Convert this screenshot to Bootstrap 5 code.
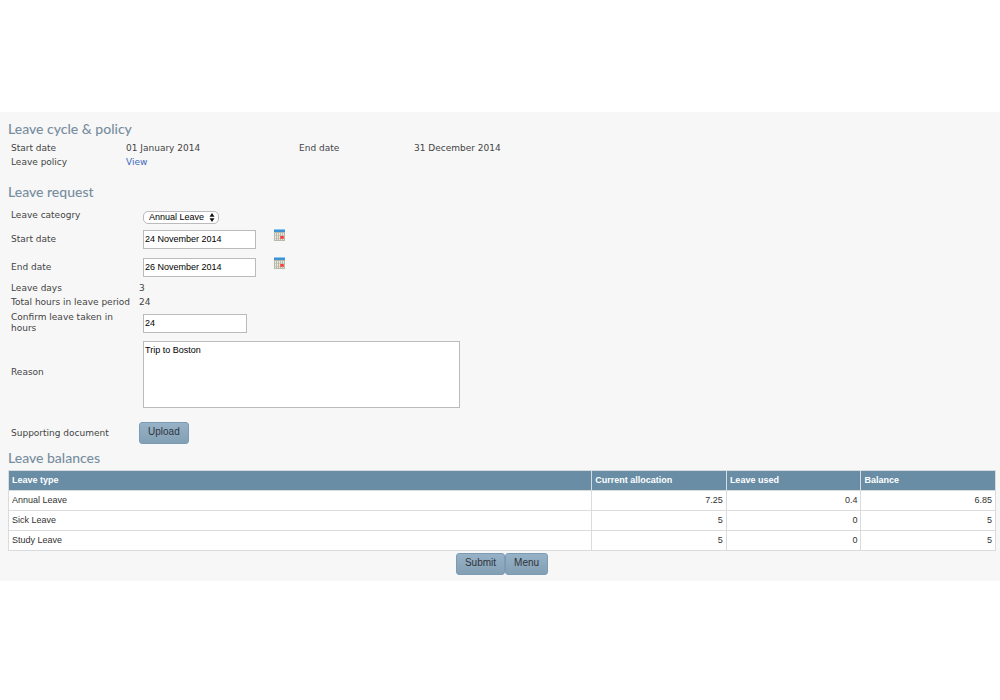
<!DOCTYPE html>
<html lang="en">
<head>
<meta charset="utf-8">
<meta name="viewport" content="width=device-width, initial-scale=1">
<title>Leave request</title>
<link href="https://cdn.jsdelivr.net/npm/bootstrap@5.3.0/dist/css/bootstrap.min.css" rel="stylesheet">
<style>
  body { background: #fff; padding-top: 112px; color: #444; font: 9px/14px "DejaVu Sans", Verdana, sans-serif; }
  .leave-page { background: #f7f7f7; padding: 7px 4px 6px 8px; }
  h2 { font: 500 14px/20px Lato, "Noto Sans", sans-serif; color: #778e9f; margin: 0; }
  a { color: #4168b8; text-decoration: none; }
  .cycle { margin: 2px 0 13px; padding-left: 3px; display: grid; grid-template-columns: 115px 173px 115px auto; justify-content: start; }
  .line { display: grid; grid-template-columns: 128px 1fr; align-items: center; padding-left: 3px; min-height: 14px; }
  .line-field { min-height: 28px; }
  .line-category { padding-top: 5px; padding-bottom: 1px; }
  .line-upload { padding-top: 10px; padding-bottom: 4px; }
  .line label { line-height: 11px; padding-right: 8px; }
  .field { margin-left: 4px; }
  .field.form-control, .field.form-select { font: 9px/14px "Liberation Sans", Arial, sans-serif; color: #000; border: 1px solid #bbb; border-radius: 0; padding: 1px; min-height: 0; background-color: #fff; }
  .form-control.date-box { width: 113px; height: 19px; }
  .form-control.hours-box { width: 104px; height: 19px; }
  .form-control.reason-box { width: 317px; height: 67px; resize: none; }
  .field.form-select { width: 76px; height: 13px; line-height: 11px; border-radius: 5px; padding: 0 12px 0 5px;
    background-image: url("data:image/svg+xml,%3Csvg xmlns='http://www.w3.org/2000/svg' viewBox='0 0 6 9'%3E%3Cpath d='M3 0 5.5 3.7H.5zM3 9 .5 5.3h5z' fill='%23111'/%3E%3C/svg%3E");
    background-size: 6px 9px; background-position: right 3px center; }
  .cal { border: 0; background: none; padding: 0; margin: 0 0 8px 18px; line-height: 0; }
  .btn.btn-leave { font: 10px/12px "Liberation Sans", Arial, sans-serif; color: #2e3439; padding: 3px 8px 5px; height: 22px;
    background: linear-gradient(#97b2c7, #839fb4); border: 1px solid #7b9cb4; border-radius: 3px; }
  .table.balances { font: 9px/13px "Liberation Sans", Arial, sans-serif; table-layout: fixed; margin: 2px 0; border-color: #d9dcde; }
  .table.balances th, .table.balances td { padding: 3px; color: #333; background: #fff; border: 1px solid #d9dcde; }
  .table.balances thead th { background: #688da5; color: #fff; border-color: #d9dcde; }
  .type-col { width: 59.1%; }
</style>
</head>
<body>
<main class="leave-page">
  <h2>Leave cycle &amp; policy</h2>
  <div class="cycle">
    <span>Start date</span><span>01 January 2014</span><span>End date</span><span>31 December 2014</span>
    <span>Leave policy</span><a href="#policy">View</a>
  </div>

  <form>
    <h2>Leave request</h2>
    <div class="line line-category">
      <label for="category">Leave cateogry</label>
      <div class="pt-1"><select id="category" class="form-select field"><option>Annual Leave</option></select></div>
    </div>
    <div class="line line-field">
      <label for="start">Start date</label>
      <div class="d-flex align-items-center">
        <input id="start" type="text" class="form-control field date-box" value="24 November 2014">
        <button type="button" class="cal" aria-label="Choose start date">
          <svg width="12" height="12" viewBox="0 0 12 12" shape-rendering="crispEdges"><path fill="#b9b9aa" d="M0 3h11v9H0z"/><path fill="#e9e9e0" d="M1 4h1v7H1zM3 4h1v7H3zM5 4h1v7H5zM7 4h1v7H7zM9 4h1v7H9z"/><path fill="#b9b9aa" opacity=".6" d="M0 6h11v1H0zM0 9h11v1H0z"/><path fill="#3c93d6" d="M0 0h11v3H0z"/><path fill="#8fc4ec" d="M0 0h11v1H0z"/><path fill="#f0615b" d="M6 7h4v3H6z"/><path fill="#ff3c3c" d="M7 7h2v2H7z"/></svg>
        </button>
      </div>
    </div>
    <div class="line line-field">
      <label for="end">End date</label>
      <div class="d-flex align-items-center">
        <input id="end" type="text" class="form-control field date-box" value="26 November 2014">
        <button type="button" class="cal" aria-label="Choose end date">
          <svg width="12" height="12" viewBox="0 0 12 12" shape-rendering="crispEdges"><path fill="#b9b9aa" d="M0 3h11v9H0z"/><path fill="#e9e9e0" d="M1 4h1v7H1zM3 4h1v7H3zM5 4h1v7H5zM7 4h1v7H7zM9 4h1v7H9z"/><path fill="#b9b9aa" opacity=".6" d="M0 6h11v1H0zM0 9h11v1H0z"/><path fill="#3c93d6" d="M0 0h11v3H0z"/><path fill="#8fc4ec" d="M0 0h11v1H0z"/><path fill="#f0615b" d="M6 7h4v3H6z"/><path fill="#ff3c3c" d="M7 7h2v2H7z"/></svg>
        </button>
      </div>
    </div>
    <div class="line"><span>Leave days</span><span>3</span></div>
    <div class="line"><span>Total hours in leave period</span><span>24</span></div>
    <div class="line line-field">
      <label for="hours">Confirm leave taken in hours</label>
      <input id="hours" type="text" class="form-control field hours-box" value="24">
    </div>
    <div class="line py-1">
      <label for="reason" class="pb-1">Reason</label>
      <textarea id="reason" class="form-control field reason-box">Trip to Boston</textarea>
    </div>
    <div class="line line-upload">
      <label for="upload">Supporting document</label>
      <div><button id="upload" type="button" class="btn btn-leave">Upload</button></div>
    </div>

    <h2>Leave balances</h2>
    <table class="table balances">
      <colgroup><col class="type-col"><col><col><col></colgroup>
      <thead><tr><th>Leave type</th><th>Current allocation</th><th>Leave used</th><th>Balance</th></tr></thead>
      <tbody class="text-end">
        <tr><td class="text-start">Annual Leave</td><td>7.25</td><td>0.4</td><td>6.85</td></tr>
        <tr><td class="text-start">Sick Leave</td><td>5</td><td>0</td><td>5</td></tr>
        <tr><td class="text-start">Study Leave</td><td>5</td><td>0</td><td>5</td></tr>
      </tbody>
    </table>
    <div class="d-flex justify-content-center">
      <button type="submit" class="btn btn-leave">Submit</button>
      <button type="button" class="btn btn-leave">Menu</button>
    </div>
  </form>
</main>
<script src="https://cdn.jsdelivr.net/npm/bootstrap@5.3.0/dist/js/bootstrap.bundle.min.js"></script>
</body>
</html>
